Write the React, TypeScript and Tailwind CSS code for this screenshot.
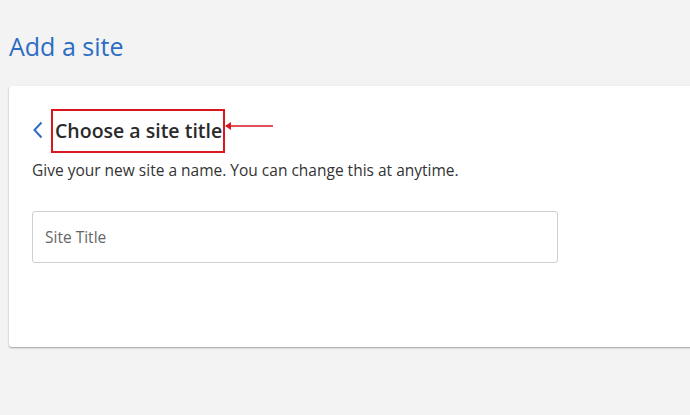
import React from 'react';

const font = { fontFamily: '"Open Sans", "Noto Sans", sans-serif' };

export default function App() {
  return (
    <div className="w-[690px] h-[415px] bg-[#f3f3f3] overflow-hidden" style={font}>
      <div className="pl-[9px] pt-[29px]">
        <h1 className="text-[25px] leading-[34px] text-[#2d6cc5]">Add a site</h1>
        <div className="mt-[23px] w-[700px] h-[261px] bg-white rounded-[3px] shadow-[0_1px_2px_rgba(0,0,0,0.35)] pl-[23px] pt-[23px]">
          <div className="flex items-center">
            <svg width="12" height="18" viewBox="0 0 12 18" className="mr-[7px] mt-[-2px]">
              <path d="M9.5 1.5 L2.5 9 L9.5 16.5" fill="none" stroke="#2d6cc5" strokeWidth="2" />
            </svg>
            <div className="relative border-2 border-[#d9171e] h-[44px] pl-[2px] pr-[1px] flex items-center">
              <h2 className="text-[19.5px] font-semibold text-[#2b2b2b] leading-none">Choose a site title</h2>
              <div className="absolute left-full top-[10px] flex items-center ml-[1px]">
                <svg width="50" height="10" viewBox="0 0 50 10">
                  <path d="M2 5 H49" stroke="#d9171e" strokeWidth="1.5" />
                  <path d="M7 1 L1 5 L7 9 Z" fill="#d9171e" />
                </svg>
              </div>
            </div>
          </div>
          <p className="mt-[7px] text-[15.5px] text-[#333] leading-[20px]">
            Give your new site a name. You can change this at anytime.
          </p>
          <input
            placeholder="Site Title"
            className="mt-[31px] w-[526px] h-[52px] border border-[#cfcfcf] rounded-[3px] px-[12px] text-[15.5px] text-[#333] placeholder:text-[#666] outline-none"
            style={font}
          />
        </div>
      </div>
    </div>
  );
}
